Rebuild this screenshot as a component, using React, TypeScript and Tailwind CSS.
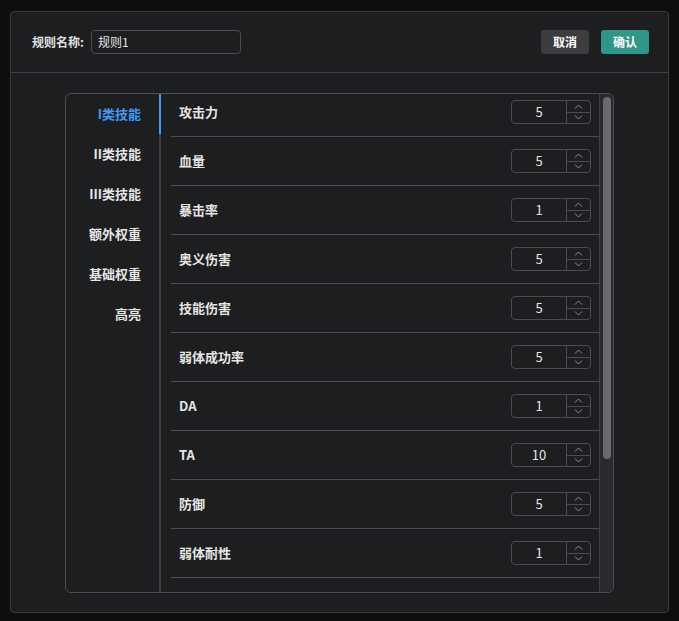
const tabs = ["I类技能", "II类技能", "III类技能", "额外权重", "基础权重", "高亮"];
const rows: [string, number][] = [
  ["攻击力", 5],
  ["血量", 5],
  ["暴击率", 1],
  ["奥义伤害", 5],
  ["技能伤害", 5],
  ["弱体成功率", 5],
  ["DA", 1],
  ["TA", 10],
  ["防御", 5],
  ["弱体耐性", 1],
];

function Stepper({ v }: { v: number }) {
  return (
    <div className="flex h-[24px] w-[80px] rounded-[4px] border border-[#4a4c50] bg-[#1d1e20]">
      <div className="flex flex-1 items-center justify-center text-[13px] text-[#e5e5e5]">{v}</div>
      <div className="flex w-[24px] flex-col border-l border-[#4a4c50]">
        <div className="flex flex-1 items-center justify-center border-b border-[#4a4c50]">
          <svg width="9" height="5" viewBox="0 0 9 5"><path d="M1 4.5L4.5 1L8 4.5" fill="none" stroke="#8a8c90" strokeWidth="1" /></svg>
        </div>
        <div className="flex flex-1 items-center justify-center">
          <svg width="9" height="5" viewBox="0 0 9 5"><path d="M1 0.5L4.5 4L8 0.5" fill="none" stroke="#8a8c90" strokeWidth="1" /></svg>
        </div>
      </div>
    </div>
  );
}

export default function App() {
  return (
    <div className="h-[621px] w-[679px] bg-[#0f0f10] pl-[10px] pt-[11px]" style={{ fontFamily: '"Noto Sans CJK SC", "Noto Sans", sans-serif' }}>
      <div className="flex h-[602px] w-[659px] flex-col rounded-[4px] border border-[#3a3b3e] bg-[#1d1e20]">
        <div className="flex h-[61px] items-center border-b border-[#3e4043] pl-[21px] pr-[19px]">
          <span className="text-[12px] font-bold text-[#e0e0e0]">规则名称:</span>
          <div className="ml-[7px] flex h-[24px] w-[150px] items-center rounded-[4px] border border-[#4a4c50] px-[6px] text-[12px] text-[#e5e5e5]">规则1</div>
          <div className="flex-1" />
          <button className="h-[24px] w-[48px] rounded-[3px] bg-[#3c3d40] text-[12px] font-bold text-white">取消</button>
          <button className="ml-[12px] h-[24px] w-[48px] rounded-[3px] bg-[#2f9688] text-[12px] font-bold text-white">确认</button>
        </div>
        <div className="flex flex-1 justify-center pt-[20px]">
          <div className="flex h-[500px] w-[549px] overflow-hidden rounded-[6px] border border-[#4a4c50]">
            <div className="flex w-[95px] flex-col items-end border-r-2 border-[#3e4043]">
              {tabs.map((t, i) => (
                <div key={t} className={`relative flex h-[40px] w-full items-center justify-end pr-[18px] text-[13px] font-bold ${i === 0 ? "text-[#3d9bf5]" : "text-[#e5e5e5]"}`}>
                  {t}
                  {i === 0 && <div className="absolute right-[-2px] top-0 h-[40px] w-[2px] bg-[#3d9bf5]" />}
                </div>
              ))}
            </div>
            <div className="flex-1 overflow-hidden pl-[10px]">
              <div className="-mt-[6px]">
                {rows.map(([n, v]) => (
                  <div key={n} className="flex h-[49px] items-center justify-between border-b border-[#4a4c50] pl-[8px] pr-[8px]">
                    <span className="text-[13px] font-bold text-[#e5e5e5]">{n}</span>
                    <Stepper v={v} />
                  </div>
                ))}
              </div>
            </div>
            <div className="w-[14px] border-l border-[#3e4043] bg-[#2a2b2e] pt-[3px]">
              <div className="mx-auto h-[362px] w-[8px] rounded-full bg-[#6a6b6e]" />
            </div>
          </div>
        </div>
      </div>
    </div>
  );
}
